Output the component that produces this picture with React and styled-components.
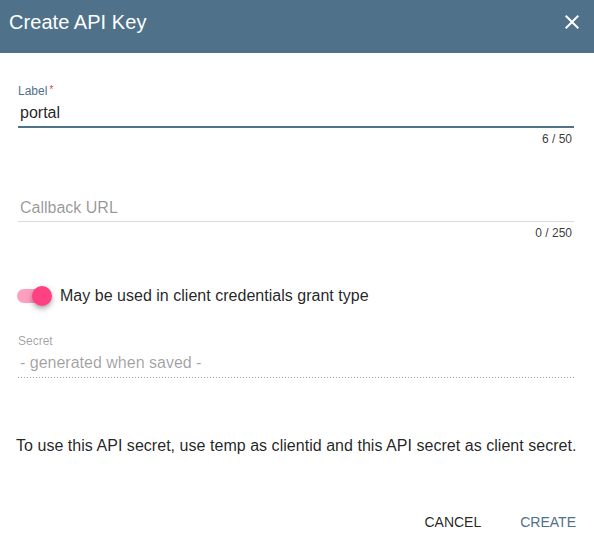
import React from "react";
import styled, { createGlobalStyle } from "styled-components";

const Global = createGlobalStyle`
  html, body { margin: 0; padding: 0; background: #fff; }
  body { font-family: "Liberation Sans", Arial, Helvetica, sans-serif; }
  * { box-sizing: border-box; }
`;

const PRIMARY = "#4f7189";
const ACCENT = "#ff4081";

const Dialog = styled.div`
  width: 594px;
  height: 542px;
  display: flex;
  flex-direction: column;
  background: #fff;
`;

const Header = styled.header`
  height: 53px;
  background: ${PRIMARY};
  display: flex;
  justify-content: space-between;
  align-items: flex-start;
  padding: 6px 10px 0 9px;
`;

const Title = styled.h1`
  margin: 0;
  font-size: 20px;
  line-height: 32px;
  font-weight: 400;
  color: #fff;
  letter-spacing: 0.05px;
`;

const CloseButton = styled.button`
  margin-top: 4px;
  width: 24px;
  height: 24px;
  padding: 0;
  border: 0;
  background: transparent;
  color: #fff;
  display: flex;
  align-items: center;
  justify-content: center;
  cursor: pointer;
`;

const Body = styled.div`
  display: flex;
  flex-direction: column;
  padding: 0 20px 0 16px;
`;

const Field = styled.div`
  margin-left: 2px;
  margin-top: ${(p) => p.$top}px;
  display: flex;
  flex-direction: column;
`;

const FieldLabel = styled.label`
  display: block;
  height: 16px;
  font-size: 12px;
  line-height: 16px;
  color: ${(p) => p.$color};
`;

const Required = styled.span`
  color: #f44336;
  font-size: 10px;
  vertical-align: top;
  margin-left: 2px;
  line-height: 14px;
`;

const InputRow = styled.div`
  box-sizing: content-box;
  height: ${(p) => p.$h}px;
  line-height: ${(p) => p.$h}px;
  font-size: 16px;
  color: ${(p) => p.$color};
  padding-left: 2px;
  border-bottom: ${(p) => p.$line};
  white-space: nowrap;
`;

const DottedRow = styled.div`
  height: ${(p) => p.$h + 1}px;
  line-height: ${(p) => p.$h}px;
  font-size: 16px;
  color: rgba(0, 0, 0, 0.38);
  padding-left: 2px;
  white-space: nowrap;
  background-image: linear-gradient(to right, rgba(0,0,0,0.38) 0, rgba(0,0,0,0.38) 1px, transparent 1px);
  background-size: 3px 1px;
  background-repeat: repeat-x;
  background-position: bottom left;
`;

const Counter = styled.div`
  margin-top: 3px;
  height: 16px;
  font-size: 12px;
  line-height: 16px;
  text-align: right;
  color: rgba(0, 0, 0, 0.8);
  padding-right: 2px;
`;

const SwitchRow = styled.div`
  margin-top: 43px;
  margin-left: 1px;
  height: 24px;
  display: flex;
  align-items: center;
  gap: 8px;
`;

const SwitchBox = styled.div`
  position: relative;
  width: 35px;
  height: 24px;
  flex: none;
`;

const Track = styled.div`
  position: absolute;
  left: 0;
  top: 5px;
  width: 33px;
  height: 14px;
  border-radius: 8px;
  background: ${ACCENT};
  opacity: 0.5;
`;

const Thumb = styled.div`
  position: absolute;
  left: 15px;
  top: 2px;
  width: 20px;
  height: 20px;
  border-radius: 50%;
  background: ${ACCENT};
  box-shadow: 0 2px 4px -1px rgba(0,0,0,0.2), 0 4px 5px 0 rgba(0,0,0,0.14), 0 1px 10px 0 rgba(0,0,0,0.12);
`;

const SwitchLabel = styled.span`
  font-size: 16px;
  line-height: 24px;
  color: rgba(0, 0, 0, 0.87);
  letter-spacing: 0.02px;
`;

const Paragraph = styled.p`
  margin: 56px 0 0 0;
  font-size: 16px;
  line-height: 24px;
  color: rgba(0, 0, 0, 0.87);
  white-space: nowrap;
  letter-spacing: 0.035px;
`;

const Actions = styled.div`
  margin-top: 46px;
  display: flex;
  justify-content: flex-end;
  gap: 7px;
  padding-right: 2px;
`;

const TextButton = styled.button`
  height: 36px;
  padding: 0 16px;
  border: 0;
  background: transparent;
  font-family: inherit;
  font-size: 14px;
  font-weight: 400;
  text-transform: uppercase;
  color: ${(p) => p.$color};
  cursor: pointer;
`;

export default function App() {
  return (
    <>
      <Global />
      <Dialog>
        <Header>
          <Title>Create API Key</Title>
          <CloseButton aria-label="close">
            <svg width="24" height="24" viewBox="0 0 24 24">
              <path
                fill="currentColor"
                d="M19,6.41L17.59,5L12,10.59L6.41,5L5,6.41L10.59,12L5,17.59L6.41,19L12,13.41L17.59,19L19,17.59L13.41,12L19,6.41Z"
              />
            </svg>
          </CloseButton>
        </Header>
        <Body>
          <Field $top={30}>
            <FieldLabel $color={PRIMARY}>
              Label<Required>*</Required>
            </FieldLabel>
            <InputRow $h={27} $color="rgba(0,0,0,0.87)" $line={`2px solid ${PRIMARY}`}>
              portal
            </InputRow>
            <Counter>6 / 50</Counter>
          </Field>
          <Field $top={31}>
            <FieldLabel $color="transparent" />
            <InputRow $h={27} $color="rgba(0,0,0,0.42)" $line="1px solid rgba(0,0,0,0.14)">
              Callback URL
            </InputRow>
            <Counter>0 / 250</Counter>
          </Field>
          <SwitchRow>
            <SwitchBox>
              <Track />
              <Thumb />
            </SwitchBox>
            <SwitchLabel>May be used in client credentials grant type</SwitchLabel>
          </SwitchRow>
          <Field $top={25}>
            <FieldLabel $color="rgba(0,0,0,0.38)">Secret</FieldLabel>
            <DottedRow $h={28}>- generated when saved -</DottedRow>
          </Field>
          <Paragraph>
            To use this API secret, use temp as clientid and this API secret as client secret.
          </Paragraph>
        </Body>
        <Actions>
          <TextButton $color="rgba(0,0,0,0.87)">Cancel</TextButton>
          <TextButton $color={PRIMARY}>Create</TextButton>
        </Actions>
      </Dialog>
    </>
  );
}
